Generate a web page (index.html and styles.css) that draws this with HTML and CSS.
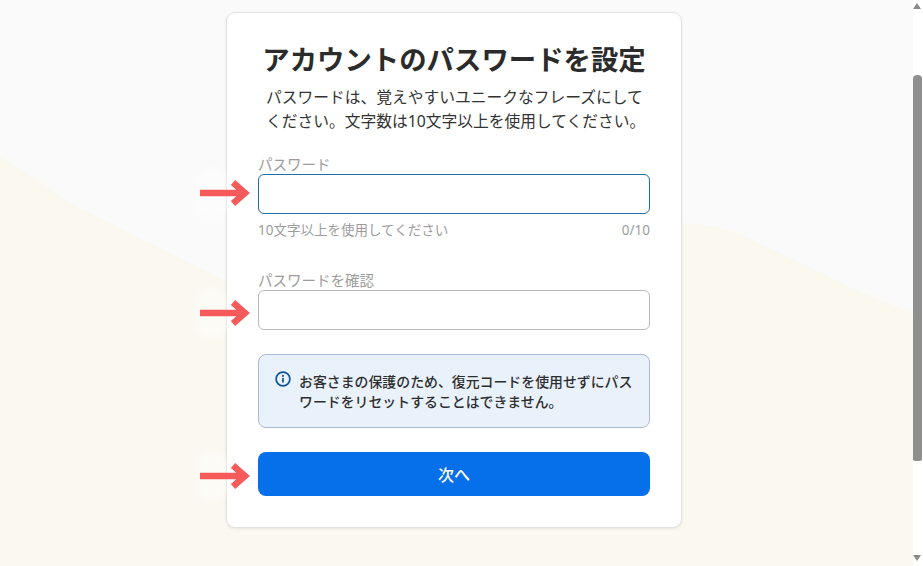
FILE: index.html
```html
<!DOCTYPE html>
<html lang="ja">
<head>
<meta charset="utf-8">
<title>アカウントのパスワードを設定</title>
<link rel="stylesheet" href="styles.css">
</head>
<body>
<div class="window">
  <main class="page">
    <svg class="wave" viewBox="0 0 913 566" preserveAspectRatio="none" aria-hidden="true">
      <path d="M0 157C30 172 55 195 80 208C130 234 180 258 223 280C350 330 520 240 686 223C710 224 730 230 747 237C800 262 860 294 913 313V566H0Z"/>
    </svg>
    <section class="card">
      <h1 class="title">アカウントのパスワードを設定</h1>
      <p class="lead">パスワードは、覚えやすいユニークなフレーズにしてください。文字数は10文字以上を使用してください。</p>
      <div class="field first">
        <label class="label">パスワード</label>
        <input class="input focused" type="password">
        <div class="hint"><span>10文字以上を使用してください</span><span>0/10</span></div>
      </div>
      <div class="field second">
        <label class="label">パスワードを確認</label>
        <input class="input" type="password">
      </div>
      <div class="notice">
        <svg class="info" viewBox="0 0 16 16" aria-hidden="true">
          <circle cx="8" cy="8" r="6.9"/>
          <rect x="7.1" y="7" width="1.8" height="4.6" rx=".3"/>
          <circle class="dot" cx="8" cy="4.9" r="1.05"/>
        </svg>
        <p class="notice-text">お客さまの保護のため、復元コードを使用せずにパスワードをリセットすることはできません。</p>
      </div>
      <button class="next" type="button">次へ</button>
    </section>
    <div class="note note-a"><svg viewBox="0 0 50 28"><path d="M0 14H45M33 3.500L45 14L33 24.500"/></svg></div>
    <div class="note note-b"><svg viewBox="0 0 50 28"><path d="M0 14H45M33 3.500L45 14L33 24.500"/></svg></div>
    <div class="note note-c"><svg viewBox="0 0 50 28"><path d="M0 14H45M33 3.500L45 14L33 24.500"/></svg></div>
  </main>
  <div class="scrollbar">
    <span class="sb-up"></span>
    <span class="sb-thumb"></span>
    <span class="sb-down"></span>
  </div>
</div>
</body>
</html>
```
FILE: styles.css
```css
* { box-sizing: border-box; }
html, body { margin: 0; height: 100%; overflow: hidden; }
body {
  font-family: "Noto Sans", "Noto Sans CJK JP", sans-serif;
  color: #2b2b2b;
  background: #fff;
}
.window { display: flex; height: 566px; width: 923px; }
.page {
  position: relative;
  flex: 1;
  display: flex;
  justify-content: center;
  align-items: flex-start;
  padding: 12px 0 0;
  background: #fafafb;
  overflow: hidden;
}
.wave { position: absolute; inset: 0; width: 100%; height: 100%; }
.wave path { fill: #fbf8ef; }
.card {
  position: relative;
  width: 456px;
  height: 516px;
  margin-left: -5px;
  padding: 26px 31px 0;
  background: #fff;
  border: 1px solid #e2e2e2;
  border-radius: 9px;
  box-shadow: 0 1px 3px rgba(0, 0, 0, .08);
}
.title {
  margin: 0;
  font-size: 27.4px;
  line-height: 42px;
  font-weight: 700;
  text-align: center;
  color: #2b2b2b;
  white-space: nowrap;
}
.lead {
  width: 384px;
  margin: 4px 0 0 8px;
  font-size: 15.75px;
  line-height: 24px;
  color: #333;
}
.field { display: flex; flex-direction: column; }
.first { margin-top: 25px; }
.second { margin-top: 34px; }
.label {
  height: 16px;
  font-size: 14.5px;
  line-height: 12px;
  color: #9c9c9c;
  white-space: nowrap;
}
.input {
  display: block;
  width: 100%;
  height: 40px;
  background: #fff;
  border: 1px solid #b9b9b9;
  border-radius: 6px;
  outline: 0;
}
.focused { border-color: #1f6fa8; }
.hint {
  display: flex;
  justify-content: space-between;
  margin-top: 6px;
  font-size: 13.5px;
  line-height: 20px;
  color: #9c9c9c;
}
.notice {
  display: flex;
  gap: 8px;
  height: 74px;
  margin-top: 24px;
  padding: 16px 8px 0 16px;
  background: #e9f1fb;
  border: 1px solid #a9bad3;
  border-radius: 8px;
}
.info { flex: none; width: 16px; height: 16px; }
.info circle { fill: none; stroke: #0f559b; stroke-width: 1.7; }
.info rect, .info .dot { fill: #0f559b; stroke: none; }
.notice-text {
  margin: 0;
  padding-top: 1px;
  font-size: 13.9px;
  line-height: 20px;
  font-weight: 500;
  color: #2e2e2e;
}
.next {
  display: block;
  width: 100%;
  height: 44px;
  margin-top: 24px;
  border: 0;
  border-radius: 8px;
  background: #0670eb;
  color: #fff;
  font: 500 16px/44px "Noto Sans", "Noto Sans CJK JP", sans-serif;
}
.note {
  position: absolute;
  left: 196px;
  width: 54px;
  height: 28px;
  display: flex;
  justify-content: flex-end;
}
.note::before {
  content: "";
  position: absolute;
  left: 0;
  top: -12px;
  width: 32px;
  height: 52px;
  border-radius: 14px;
  background: rgba(255, 255, 255, .4);
  filter: blur(3px);
}
.note svg { position: relative; width: 50px; height: 28px; }
.note path { fill: none; stroke: #f75a5a; stroke-width: 6.500; }
.note-a { top: 179px; }
.note-b { top: 299px; }
.note-c { top: 462px; }
.scrollbar {
  position: relative;
  flex: none;
  width: 10px;
  display: flex;
  flex-direction: column;
  align-items: flex-start;
  background: #fff;
}
.sb-up, .sb-down {
  width: 0;
  height: 0;
  border-left: 4.500px solid transparent;
  border-right: 4.500px solid transparent;
}
.sb-up { margin-top: 3px; border-bottom: 6px solid #8a8a8a; }
.sb-thumb {
  width: 9px;
  height: 386px;
  margin-top: 66px;
  background: #8f8f8f;
  border-radius: 5px 5px 3px 3px / 4px 4px 2px 2px;
}
.sb-down { margin-top: 94px; border-top: 6px solid #8a8a8a; }
```
